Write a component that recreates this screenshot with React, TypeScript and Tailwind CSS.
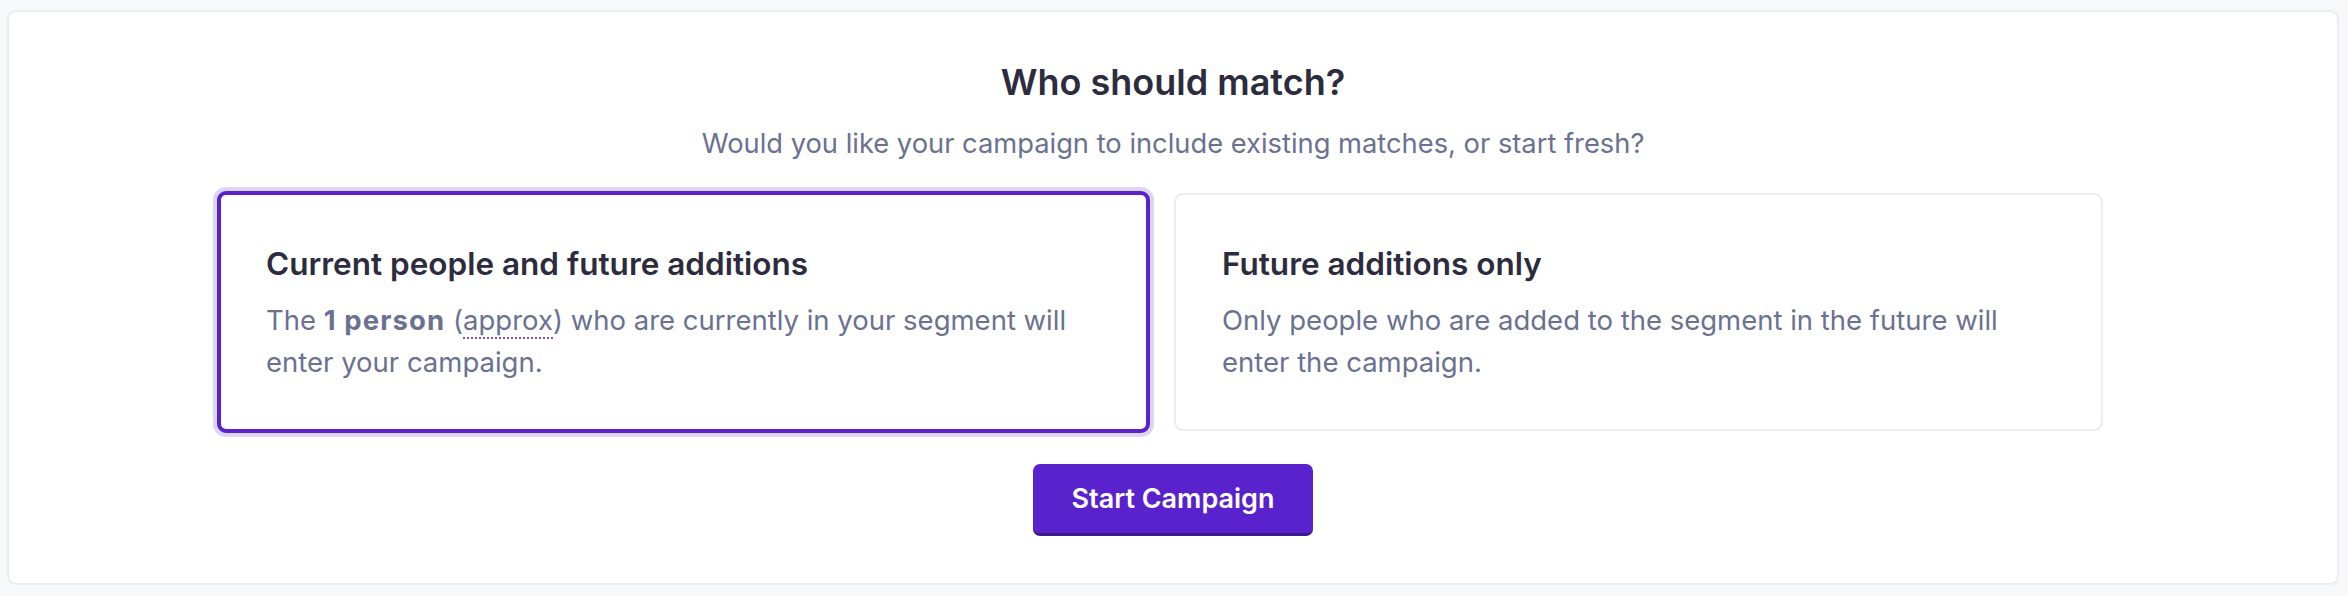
import React, { useState } from 'react';

type Option = 'all' | 'future';

const selectedCls =
  'text-left bg-white rounded-[9px] border-4 border-[#5a21cd] shadow-[0_0_0_4px_#ddd5f4] pl-[45px] pr-[44px] pt-[48px] pb-[46px]';
const idleCls =
  'text-left bg-white rounded-[9px] border-2 border-[#ebebf1] mt-[2px] pl-[46px] pr-[46px] pt-[48px] pb-[46px]';

const App: React.FC = () => {
  const [selected, setSelected] = useState<Option>('all');

  return (
    <div
      className="w-full h-[596px] bg-[#f7f8fa] pt-[10px] pl-[7px] pr-[9px]"
      style={{ fontFamily: 'Inter, "Noto Sans", sans-serif' }}
    >
      <div className="bg-white border-2 border-[#ebebf1] rounded-[9px] pt-[46px] pb-[47px]">
        {/* Header */}
        <h2 className="text-center text-[36px] leading-[48px] font-semibold text-[#2d2c3e]">
          Who should match?
        </h2>
        <p className="mt-[18px] text-center text-[27.3px] leading-[40px] text-[#6b7190]">
          Would you like your campaign to include existing matches, or start fresh?
        </p>

        {/* Options */}
        <div className="mt-[27px] ml-[208px] grid grid-cols-[933px_929px] gap-[24px] items-start">
          <button
            type="button"
            onClick={() => setSelected('all')}
            className={selected === 'all' ? selectedCls : idleCls}
          >
            <div className="text-[31.5px] leading-[42px] font-semibold text-[#2d2c3e]">
              Current people and future additions
            </div>
            <div className="mt-[14px] text-[27.5px] leading-[42px] text-[#6b7190]">
              The <span className="font-bold tracking-[0.04em]">1 person</span> (
              <span className="border-b-2 border-dotted border-[#7b4fe0]">approx</span>) who are
              currently in your segment will enter your campaign.
            </div>
          </button>

          <button
            type="button"
            onClick={() => setSelected('future')}
            className={selected === 'future' ? selectedCls : idleCls}
          >
            <div className="text-[31.5px] leading-[42px] font-semibold text-[#2d2c3e]">
              Future additions only
            </div>
            <div className="mt-[14px] text-[27.5px] leading-[42px] text-[#6b7190]">
              Only people who are added to the segment in the future will enter the campaign.
            </div>
          </button>
        </div>

        {/* Action */}
        <div className="mt-[31px] flex justify-center">
          <button
            type="button"
            className="w-[280px] h-[72px] pt-[2px] rounded-[7px] bg-[#5a22cc] border-b-[3px] border-[#3d1a8a] text-white text-[27px] font-semibold"
          >
            Start Campaign
          </button>
        </div>
      </div>
    </div>
  );
};

export default App;
